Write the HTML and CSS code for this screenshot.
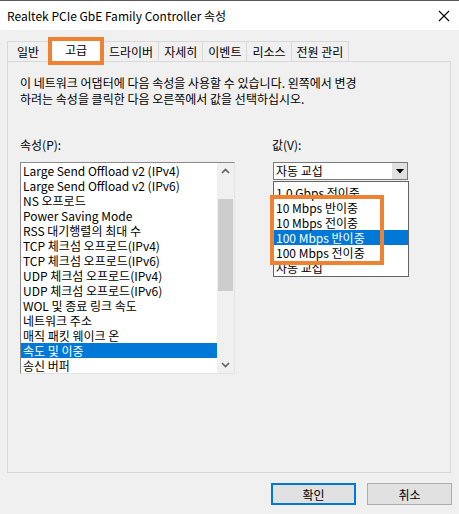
FILE: index.html
```html
<!DOCTYPE html>
<html>
<head>
    <link rel="stylesheet" href="styles.css">
</head>
<body>
    <div class="window">
        <div class="titlebar">
            <span>Realtek PCIe GbE Family Controller 속성</span>
            <svg class="close" width="12" height="12" viewBox="0 0 12 12">
                <path d="M1 1 L11 11 M11 1 L1 11" stroke="#000" stroke-width="1.1" fill="none"/>
            </svg>
        </div>

        <div class="tabs">
            <div class="tab">일반</div>
            <div class="tab active">고급</div>
            <div class="tab">드라이버</div>
            <div class="tab">자세히</div>
            <div class="tab">이벤트</div>
            <div class="tab">리소스</div>
            <div class="tab">전원 관리</div>
        </div>

        <div class="panel">
            <p class="desc">이 네트워크 어댑터에 다음 속성을 사용할 수 있습니다. 왼쪽에서 변경<br>하려는 속성을 클릭한 다음 오른쪽에서 값을 선택하십시오.</p>

            <div class="columns">
                <div class="col">
                    <div class="label">속성(P):</div>
                    <div class="listbox">
                        <ul class="items">
                            <li>Large Send Offload v2 (IPv4)</li>
                            <li>Large Send Offload v2 (IPv6)</li>
                            <li>NS 오프로드</li>
                            <li>Power Saving Mode</li>
                            <li>RSS 대기행렬의 최대 수</li>
                            <li>TCP 체크섬 오프로드(IPv4)</li>
                            <li>TCP 체크섬 오프로드(IPv6)</li>
                            <li>UDP 체크섬 오프로드(IPv4)</li>
                            <li>UDP 체크섬 오프로드(IPv6)</li>
                            <li>WOL 및 종료 링크 속도</li>
                            <li>네트워크 주소</li>
                            <li>매직 패킷 웨이크 온</li>
                            <li class="selected">속도 및 이중</li>
                            <li>송신 버퍼</li>
                        </ul>
                        <div class="scrollbar">
                            <svg class="arrow" width="17" height="17" viewBox="0 0 17 17">
                                <polyline points="5,10 8.5,6.5 12,10" stroke="#606060" stroke-width="1.6" fill="none"/>
                            </svg>
                            <div class="track">
                                <div class="thumb"></div>
                            </div>
                            <svg class="arrow" width="17" height="17" viewBox="0 0 17 17">
                                <polyline points="5,7 8.5,10.5 12,7" stroke="#606060" stroke-width="1.6" fill="none"/>
                            </svg>
                        </div>
                    </div>
                </div>

                <div class="col">
                    <div class="label">값(V):</div>
                    <div class="combo">
                        <span class="combo-value">자동 교섭</span>
                        <span class="combo-btn">
                            <svg width="8" height="5" viewBox="0 0 8 5"><polygon points="0,0 8,0 4,4.5" fill="#000"/></svg>
                        </span>
                        <ul class="dropdown">
                            <li>1.0 Gbps 전이중</li>
                            <li>10 Mbps 반이중</li>
                            <li>10 Mbps 전이중</li>
                            <li class="selected">100 Mbps 반이중</li>
                            <li>100 Mbps 전이중</li>
                            <li>자동 교섭</li>
                        </ul>
                        <div class="mark"></div>
                    </div>
                </div>
            </div>
        </div>

        <div class="buttons">
            <button class="btn default">확인</button>
            <button class="btn">취소</button>
        </div>
    </div>
</body>
</html>
```

FILE: styles.css
```css
body {
    margin: 0;
    padding: 0;
    background-color: #f0f0f0;
    font-family: "Noto Sans CJK KR", "Noto Sans", sans-serif;
    font-size: 12px;
    color: #000;
}

.window {
    width: 459px;
    height: 514px;
    border-top: 1px solid #5a5a5a;
    box-sizing: border-box;
    overflow: hidden;
}

.titlebar {
    height: 29px;
    background-color: #fff;
    display: flex;
    align-items: center;
    justify-content: space-between;
    padding: 0 8px 0 7px;
    line-height: 16px;
}

.close {
    margin-right: 1px;
}

.tabs {
    display: flex;
    align-items: flex-end;
    height: 20px;
    margin-top: 11px;
    padding-left: 7px;
    position: relative;
    z-index: 1;
}

.tab {
    height: 20px;
    min-width: 42px;
    padding: 0 5px;
    box-sizing: border-box;
    border: 1px solid #d9d9d9;
    border-bottom: none;
    margin-left: -1px;
    line-height: 20px;
    text-align: center;
    background-color: #f0f0f0;
}

.tab:first-child {
    margin-left: 0;
}

.tab.active {
    position: relative;
    height: 24px;
    min-width: 56px;
    margin-bottom: -1px;
    background-color: #fff;
    line-height: 22px;
}

.tab.active::after {
    content: "";
    position: absolute;
    left: -1px;
    right: -1px;
    top: -2px;
    bottom: -3px;
    border: 4px solid #ee8232;
}

.panel {
    margin: 0 8px 0 7px;
    height: 412px;
    box-sizing: border-box;
    border: 1px solid #d9d9d9;
    padding: 13px 12px;
}

.desc {
    margin: 0;
    line-height: 16px;
}

.columns {
    display: grid;
    grid-template-columns: 215px 136px;
    column-gap: 37px;
    margin-top: 30px;
}

.label {
    line-height: 16px;
    margin-bottom: 9px;
}

.listbox {
    display: flex;
    height: 212px;
    box-sizing: border-box;
    border: 1px solid;
    border-color: #8a8a8a #e3e3e3 #e3e3e3 #8a8a8a;
    background-color: #fff;
}

.items {
    list-style: none;
    margin: 0;
    padding: 0;
    flex: 1;
}

.items li,
.dropdown li {
    height: 15px;
    line-height: 15px;
    padding-left: 2px;
    white-space: nowrap;
}

.items li.selected,
.dropdown li.selected {
    background-color: #0078d7;
    color: #fff;
}

.scrollbar {
    width: 17px;
    background-color: #f0f0f0;
    display: flex;
    flex-direction: column;
}

.arrow {
    display: block;
}

.track {
    flex: 1;
    padding-top: 19px;
}

.thumb {
    margin-left: 1px;
    width: 15px;
    height: 92px;
    background-color: #cdcdcd;
}

.combo {
    position: relative;
    margin-left: 1px;
    width: 135px;
    height: 18px;
    box-sizing: border-box;
    border: 1px solid #7a7a7a;
    background-color: #fff;
    display: flex;
    align-items: center;
    justify-content: space-between;
}

.combo-value {
    padding-left: 2px;
    line-height: 16px;
}

.combo-btn {
    width: 15px;
    height: 16px;
    background-color: #e1e1e1;
    display: flex;
    align-items: center;
    justify-content: center;
}

.dropdown {
    position: absolute;
    left: -1px;
    top: 18px;
    width: 136px;
    box-sizing: border-box;
    list-style: none;
    margin: 0;
    padding: 3px 0 1px;
    border: 1px solid #646464;
    background-color: #fff;
}

.mark {
    position: absolute;
    left: -4px;
    top: 32px;
    width: 114px;
    height: 70px;
    box-sizing: border-box;
    border: 4px solid #ee8232;
}

.buttons {
    display: flex;
    justify-content: flex-end;
    gap: 11px;
    margin-top: 10px;
    padding-right: 7px;
}

.btn {
    width: 85px;
    height: 22px;
    box-sizing: border-box;
    border: 1px solid #adadad;
    background-color: #e1e1e1;
    font-family: "Noto Sans CJK KR", "Noto Sans", sans-serif;
    font-size: 12px;
    padding: 0;
}

.btn.default {
    border: 2px solid #0078d7;
}
```
